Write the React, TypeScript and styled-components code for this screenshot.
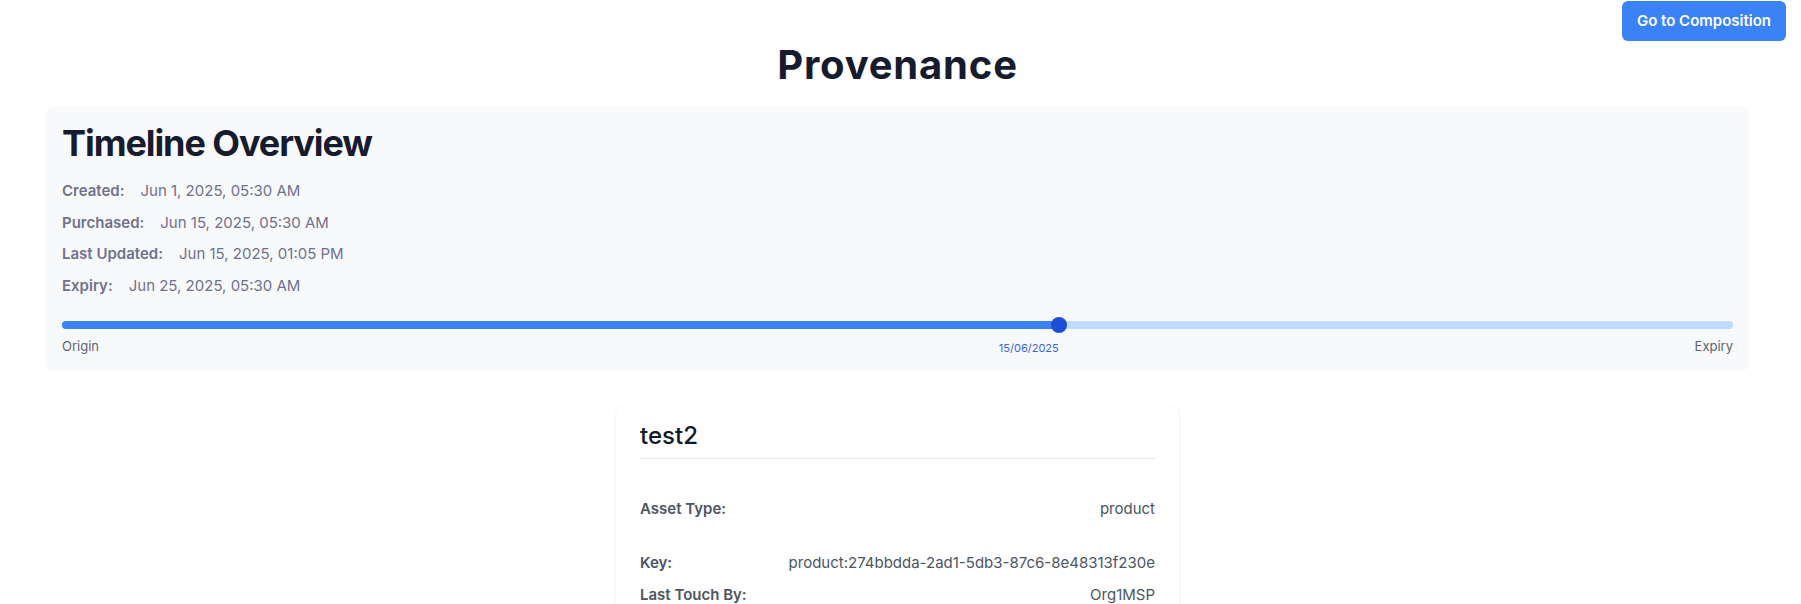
import * as React from 'react';
import styled, { createGlobalStyle } from 'styled-components';

const GlobalStyle = createGlobalStyle`
  html, body {
    margin: 0;
    padding: 0;
    background: #ffffff;
    font-family: Inter, "Noto Sans", "Liberation Sans", sans-serif;
    color: #111827;
  }
  * { box-sizing: border-box; }
`;

const Page = styled.div`
  position: relative;
  padding: 44px 52px 40px 46px;
`;

const CompositionButton = styled.button`
  position: absolute;
  top: 1px;
  right: 15px;
  height: 40px;
  padding: 0 15px;
  border: none;
  border-radius: 6px;
  background: #3b82f6;
  color: #ffffff;
  font-family: inherit;
  font-size: 15px;
  font-weight: 600;
  line-height: 20px;
  cursor: pointer;
`;

const PageTitle = styled.h1`
  margin: 0 0 22px;
  text-align: center;
  font-size: 40px;
  line-height: 41px;
  font-weight: 700;
  letter-spacing: 0.02em;
  font-optical-sizing: none;
  color: #161b2e;
`;

const TimelineCard = styled.section`
  background: #f8f9fb;
  border-radius: 8px;
  padding: 16px;
`;

const CardTitle = styled.h2`
  margin: 0 0 17px;
  font-size: 36px;
  line-height: 40px;
  font-weight: 700;
  letter-spacing: -0.03em;
  color: #161b2e;
`;

const MetaList = styled.div`
  display: flex;
  flex-direction: column;
  gap: 9px;
`;

const MetaRow = styled.div`
  display: flex;
  font-size: 15px;
  line-height: 22.5px;
  color: #70718c;
`;

const MetaLabel = styled.span`
  font-weight: 600;
  margin-right: 16px;
`;

const Slider = styled.div`
  position: relative;
  margin-top: 20px;
  padding: 4px 0;
`;

const Track = styled.div`
  height: 8px;
  border-radius: 4px;
  background: #bfdbfe;
`;

const Fill = styled.div`
  position: absolute;
  top: 4px;
  left: 0;
  height: 8px;
  border-radius: 4px;
  background: #3b82f6;
`;

const Thumb = styled.div`
  position: absolute;
  top: 0;
  width: 16px;
  height: 16px;
  margin-left: -8px;
  border-radius: 50%;
  background: #1d4ed8;
`;

const SliderLabels = styled.div`
  position: relative;
  display: flex;
  justify-content: space-between;
  margin-top: 4px;
  font-size: 13px;
  line-height: 18px;
  color: #5f6472;
`;

const DateMarker = styled.span`
  position: absolute;
  top: 3px;
  transform: translateX(-100%);
  font-size: 11px;
  line-height: 16px;
  color: #3b63e0;
`;

const DetailCard = styled.article`
  width: 563px;
  margin: 35px auto 0;
  padding: 16px 24px;
  background: #ffffff;
  border-radius: 8px;
  box-shadow: 0 1px 3px rgba(15, 23, 42, 0.08), 0 0 1px rgba(15, 23, 42, 0.06);
`;

const DetailTitle = styled.h3`
  margin: 0 0 39px;
  padding-bottom: 8px;
  border-bottom: 1px solid #e5e7eb;
  font-size: 24px;
  line-height: 28px;
  font-weight: 500;
  color: #111827;
`;

const DetailRow = styled.div<{ $gap: number }>`
  display: flex;
  justify-content: space-between;
  margin-bottom: ${(p) => p.$gap}px;
  font-size: 15px;
  line-height: 22px;
  color: #4b5563;
`;

const DetailLabel = styled.span`
  font-weight: 600;
`;

const timeline = [
  { label: 'Created:', value: 'Jun 1, 2025, 05:30 AM' },
  { label: 'Purchased:', value: 'Jun 15, 2025, 05:30 AM' },
  { label: 'Last Updated:', value: 'Jun 15, 2025, 01:05 PM' },
  { label: 'Expiry:', value: 'Jun 25, 2025, 05:30 AM' },
];

const details = [
  { label: 'Asset Type:', value: 'product', gap: 32 },
  { label: 'Key:', value: 'product:274bbdda-2ad1-5db3-87c6-8e48313f230e', gap: 10 },
  { label: 'Last Touch By:', value: 'Org1MSP', gap: 10 },
];

const origin = Date.UTC(2025, 5, 1, 0, 0);
const expiry = Date.UTC(2025, 5, 25, 0, 0);
const lastUpdated = Date.UTC(2025, 5, 15, 7, 35);
const progress = ((lastUpdated - origin) / (expiry - origin)) * 100;

export default function App() {
  return (
    <Page>
      <GlobalStyle />
      <CompositionButton>Go to Composition</CompositionButton>
      <PageTitle>Provenance</PageTitle>

      <TimelineCard>
        <CardTitle>Timeline Overview</CardTitle>
        <MetaList>
          {timeline.map((t) => (
            <MetaRow key={t.label}>
              <MetaLabel>{t.label}</MetaLabel>
              <span>{t.value}</span>
            </MetaRow>
          ))}
        </MetaList>
        <Slider>
          <Track />
          <Fill style={{ width: `${progress}%` }} />
          <Thumb style={{ left: `${progress}%` }} />
        </Slider>
        <SliderLabels>
          <span>Origin</span>
          <DateMarker style={{ left: `${progress}%` }}>15/06/2025</DateMarker>
          <span>Expiry</span>
        </SliderLabels>
      </TimelineCard>

      <DetailCard>
        <DetailTitle>test2</DetailTitle>
        {details.map((d) => (
          <DetailRow key={d.label} $gap={d.gap}>
            <DetailLabel>{d.label}</DetailLabel>
            <span>{d.value}</span>
          </DetailRow>
        ))}
      </DetailCard>
    </Page>
  );
}
